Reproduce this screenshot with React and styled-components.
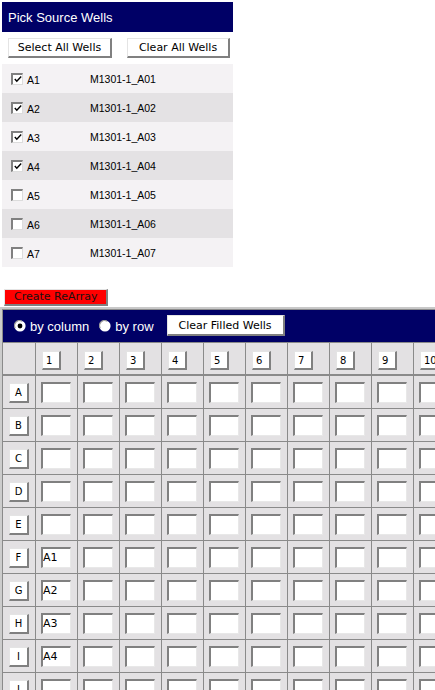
import React from "react";
import styled, { createGlobalStyle } from "styled-components";

const Global = createGlobalStyle`
  html, body { margin: 0; padding: 0; background: #fff; overflow: hidden; }
  body { font-family: "Liberation Sans", Arial, sans-serif; color: #000; }
`;

const Page = styled.div`
  padding-top: 2px;
  width: 435px;
  height: 690px;
  overflow: hidden;
`;

const SourcePanel = styled.section`
  margin-left: 2px;
  width: 231px;
`;

const PanelHeader = styled.div`
  height: 30px;
  background: #000066;
  color: #fff;
  font-size: 13px;
  display: flex;
  align-items: center;
  padding-left: 6px;
`;

const ButtonRow = styled.div`
  display: flex;
  gap: 15px;
  padding: 6px 0 6px 6px;
`;

const BevelButton = styled.button`
  box-sizing: border-box;
  width: ${(p) => p.$w}px;
  height: ${(p) => p.$h || 20}px;
  background: ${(p) => p.$bg || "#fff"};
  border-style: solid;
  border-width: 1px 2px 2px 1px;
  border-color: #e4e4e4 #808080 #808080 #e4e4e4;
  border-radius: 0;
  padding: 0;
  margin: 0;
  font-family: "DejaVu Sans", Verdana, sans-serif;
  font-size: ${(p) => p.$fs || 11}px;
  color: ${(p) => p.$color || "#000"};
  text-align: ${(p) => p.$align || "center"};
  padding-left: ${(p) => p.$pl || 0}px;
  cursor: pointer;
  flex: none;
`;

const WellRow = styled.label`
  display: flex;
  align-items: center;
  height: 29px;
  padding-left: 9px;
  background: ${(p) => (p.$alt ? "#e4e2e4" : "#f4f2f4")};
  font-size: 10.5px;
`;

const Check = styled.span`
  box-sizing: border-box;
  width: 12px;
  height: 12px;
  background: #fff;
  border-style: solid;
  border-width: 2px 1px 1px 2px;
  border-color: #808080 #dcdcdc #dcdcdc #808080;
  display: flex;
  align-items: center;
  justify-content: center;
  flex: none;
`;

const WellLabel = styled.span`
  width: 63px;
  margin-left: 4px;
  margin-top: 2px;
`;

const WellName = styled.span`
  margin-top: 1px;
`;

const ActionRow = styled.div`
  padding: 19px 0 0 4px;
`;

const GridWrap = styled.div`
  margin-top: 1px;
  border-top: 2px solid #c8c8c8;
  border-left: 2px solid #cccccc;
  background: #8a8a8a;
  padding-left: 1px;
  padding-top: 1px;
  display: grid;
  grid-template-columns: 32px repeat(24, 41px);
  grid-auto-rows: 32px;
  column-gap: 1px;
  row-gap: 1px;
  width: max-content;
`;

const Toolbar = styled.div`
  grid-column: 1 / -1;
  background: #000066;
  display: flex;
  align-items: center;
  padding-left: 11px;
  color: #fff;
  font-size: 13px;
`;

const RadioLabel = styled.span`
  margin: 0 ${(p) => p.$mr}px 0 4px;
  position: relative;
  top: 1px;
`;

const Cell = styled.div`
  background: #e3e1e3;
  box-sizing: border-box;
  padding: ${(p) => p.$pt}px 0 0 6px;
`;

const HeadCell = styled(Cell)`
  height: 31px;
`;

const WellInput = styled.input`
  box-sizing: border-box;
  width: 30px;
  height: 21px;
  margin: 0 0 0 -1px;
  padding: 0;
  background: #fff;
  border-style: solid;
  border-width: 2px 1px 1px 2px;
  border-color: #808080 #e8e8e8 #e8e8e8 #808080;
  font-family: "DejaVu Sans", Verdana, sans-serif;
  font-size: 11px;
  color: #000;
  outline: none;
`;

function CheckMark() {
  return (
    <svg width="8" height="8" viewBox="0 0 8 8">
      <polyline points="0.8,4 2.8,6.2 7.2,1.5" fill="none" stroke="#000" strokeWidth="1.4" />
    </svg>
  );
}

function Radio({ checked }) {
  return (
    <svg width="12" height="12" viewBox="0 0 12 12" style={{ flex: "none" }}>
      <circle cx="6" cy="6" r="5.6" fill="#fff" />
      <path d="M1.2 8 A5 5 0 0 1 8 1.2" fill="none" stroke="#9a9a9a" strokeWidth="1.2" />
      {checked && <circle cx="6" cy="6" r="2.4" fill="#000" />}
    </svg>
  );
}

const wells = [
  ["A1", "M1301-1_A01", true],
  ["A2", "M1301-1_A02", true],
  ["A3", "M1301-1_A03", true],
  ["A4", "M1301-1_A04", true],
  ["A5", "M1301-1_A05", false],
  ["A6", "M1301-1_A06", false],
  ["A7", "M1301-1_A07", false],
];

const rows = "ABCDEFGHIJKLMNOP".split("");
const cols = Array.from({ length: 24 }, (_, i) => i + 1);
const filled = { F1: "A1", G1: "A2", H1: "A3", I1: "A4" };

export default function App() {
  return (
    <Page>
      <Global />
      <SourcePanel>
        <PanelHeader>Pick Source Wells</PanelHeader>
        <ButtonRow>
          <BevelButton $w={104}>Select All Wells</BevelButton>
          <BevelButton $w={103}>Clear All Wells</BevelButton>
        </ButtonRow>
        {wells.map(([id, name, on], i) => (
          <WellRow key={id} $alt={i % 2 === 1}>
            <Check>{on && <CheckMark />}</Check>
            <WellLabel>{id}</WellLabel>
            <WellName>{name}</WellName>
          </WellRow>
        ))}
      </SourcePanel>
      <ActionRow>
        <BevelButton $w={104} $h={17} $bg="#ff0000" $color="#1a1010" $fs={11} $align="left" $pl={9}>
          Create ReArray
        </BevelButton>
      </ActionRow>
      <GridWrap>
        <Toolbar>
          <Radio checked />
          <RadioLabel $mr={10}>by column</RadioLabel>
          <Radio />
          <RadioLabel $mr={13}>by row</RadioLabel>
          <BevelButton $w={118} $h={21}>Clear Filled Wells</BevelButton>
        </Toolbar>
        <HeadCell $pt={7} />
        {cols.map((c) => (
          <HeadCell key={c} $pt={7}>
            <BevelButton $w={19} $h={19} $fs={10} $align="left" $pl={3}>{c}</BevelButton>
          </HeadCell>
        ))}
        {rows.map((r) => (
          <React.Fragment key={r}>
            <Cell $pt={6}>
              <BevelButton $w={20} $h={20} $fs={10}>{r}</BevelButton>
            </Cell>
            {cols.map((c) => (
              <Cell key={c} $pt={6}>
                <WellInput readOnly value={filled[r + c] || ""} />
              </Cell>
            ))}
          </React.Fragment>
        ))}
      </GridWrap>
    </Page>
  );
}
